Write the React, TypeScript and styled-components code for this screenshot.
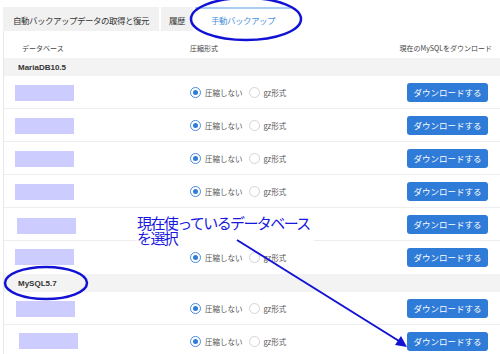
import styled, { createGlobalStyle } from "styled-components";

const GlobalStyle = createGlobalStyle`
  html, body {
    margin: 0;
    padding: 0;
    background: #ffffff;
  }
  body {
    font-family: "Noto Sans CJK JP", "Noto Sans", "Liberation Sans", sans-serif;
    color: #333;
  }
`;

const Page = styled.div`
  position: relative;
  width: 500px;
  height: 354px;
  overflow: hidden;
  padding: 7px 0 0 3px;
  box-sizing: border-box;
`;

const TabBar = styled.div`
  display: flex;
  gap: 2px;
`;

const Tab = styled.div<{ active?: boolean; pad: number }>`
  height: 24px;
  box-sizing: border-box;
  display: flex;
  align-items: center;
  padding: 0 ${(p) => p.pad}px;
  font-size: 8.5px;
  letter-spacing: -0.5px;
  background: ${(p) => (p.active ? "#ffffff" : "#f1f1f1")};
  color: ${(p) => (p.active ? "#4a90d9" : "#333")};
  border-top: 2px solid ${(p) => (p.active ? "#a9cdf2" : "#f1f1f1")};
`;

const Panel = styled.div`
  border-left: 1px solid #e8e8e8;
  padding-top: 8px;
`;

const Row = styled.div`
  display: grid;
  grid-template-columns: 175px 1fr auto;
  align-items: center;
  padding: 0 12px 0 11px;
`;

const HeadRow = styled(Row)`
  height: 18px;
  font-size: 7px;
  color: #444;
`;

const HeadCell = styled.div<{ right?: boolean }>`
  margin-right: ${(p) => (p.right ? "-4px" : "0")};
  text-align: ${(p) => (p.right ? "right" : "left")};
`;

const DbHead = styled(HeadCell)`
  padding-left: 7px;
`;

const Section = styled.div`
  background: #f3f3f3;
  height: 18px;
  display: flex;
  align-items: center;
  padding-left: 14px;
  font-family: "Liberation Sans", Arial, sans-serif;
  font-size: 8px;
  font-weight: bold;
  color: #333;
  margin-top: 1px;
`;

const DataRow = styled(Row)`
  height: 32px;
  border-top: 1px solid #eeeeee;
  &:first-of-type {
    border-top: none;
  }
`;

const Masked = styled.div<{ shift: number; drop: number }>`
  width: 59px;
  height: 16px;
  background: #ccccff;
  margin-left: ${(p) => p.shift}px;
  margin-top: ${(p) => p.drop}px;
`;

const RadioGroup = styled.div`
  display: flex;
  align-items: center;
  gap: 6px;
  font-size: 7.5px;
  color: #555;
`;

const RadioLabel = styled.label`
  display: flex;
  align-items: center;
  gap: 4px;
`;

const Dot = styled.span<{ checked?: boolean }>`
  width: 11px;
  height: 11px;
  box-sizing: border-box;
  border-radius: 50%;
  border: 1px solid ${(p) => (p.checked ? "#4a8ad8" : "#d4d4d4")};
  display: flex;
  align-items: center;
  justify-content: center;
  &::after {
    content: "";
    width: 5px;
    height: 5px;
    border-radius: 50%;
    background: ${(p) => (p.checked ? "#2f7bd9" : "transparent")};
  }
`;

const DownloadButton = styled.button`
  width: 81px;
  height: 19px;
  border: none;
  border-radius: 3px;
  background: #2f7bd8;
  color: #ffffff;
  font-family: inherit;
  font-size: 8.5px;
  padding: 0;
`;

const Overlay = styled.svg`
  position: absolute;
  left: 0;
  top: 0;
  pointer-events: none;
`;

const Note = styled.div`
  position: absolute;
  left: 137px;
  top: 215px;
  padding-right: 4px;
  background: #ffffff;
  font-size: 15px;
  line-height: 15px;
  color: #1717e0;
  letter-spacing: -1.6px;
`;

type DbRow = { shift: number; drop: number };

const maria: DbRow[] = [
  { shift: 0, drop: 2 },
  { shift: 0, drop: 2 },
  { shift: 0, drop: 2 },
  { shift: 0, drop: 2 },
  { shift: 2, drop: 3 },
  { shift: 0, drop: 0 },
];

const mysql: DbRow[] = [
  { shift: 1, drop: 2 },
  { shift: 4, drop: 0 },
];

function Entry({ row }: { row: DbRow }) {
  return (
    <DataRow>
      <Masked shift={row.shift} drop={row.drop} />
      <RadioGroup>
        <RadioLabel>
          <Dot checked />
          圧縮しない
        </RadioLabel>
        <RadioLabel>
          <Dot />
          gz形式
        </RadioLabel>
      </RadioGroup>
      <DownloadButton>ダウンロードする</DownloadButton>
    </DataRow>
  );
}

export default function App() {
  return (
    <>
      <GlobalStyle />
      <Page>
        <TabBar>
          <Tab pad={10}>自動バックアップデータの取得と復元</Tab>
          <Tab pad={8}>履歴</Tab>
          <Tab pad={16} active>
            手動バックアップ
          </Tab>
        </TabBar>
        <Panel>
          <HeadRow>
            <DbHead>データベース</DbHead>
            <HeadCell>圧縮形式</HeadCell>
            <HeadCell right>現在のMySQLをダウンロード</HeadCell>
          </HeadRow>
          <Section>MariaDB10.5</Section>
          <div>
            {maria.map((r, i) => (
              <Entry key={i} row={r} />
            ))}
          </div>
          <Section>MySQL5.7</Section>
          <div>
            {mysql.map((r, i) => (
              <Entry key={i} row={r} />
            ))}
          </div>
        </Panel>
        <Note>
          現在使っているデータベース
          <br />
          を選択
        </Note>
        <Overlay width="500" height="354" viewBox="0 0 500 354">
          <ellipse cx="246" cy="19" rx="55" ry="21" fill="none" stroke="#1212d4" strokeWidth="2.5" />
          <ellipse cx="46" cy="283" rx="41" ry="16" fill="none" stroke="#1212d4" strokeWidth="2.5" />
          <line x1="237" y1="240" x2="399" y2="341" stroke="#1212d4" strokeWidth="2" />
          <polygon points="407,347 395,345 401,336" fill="#1212d4" />
        </Overlay>
      </Page>
    </>
  );
}
